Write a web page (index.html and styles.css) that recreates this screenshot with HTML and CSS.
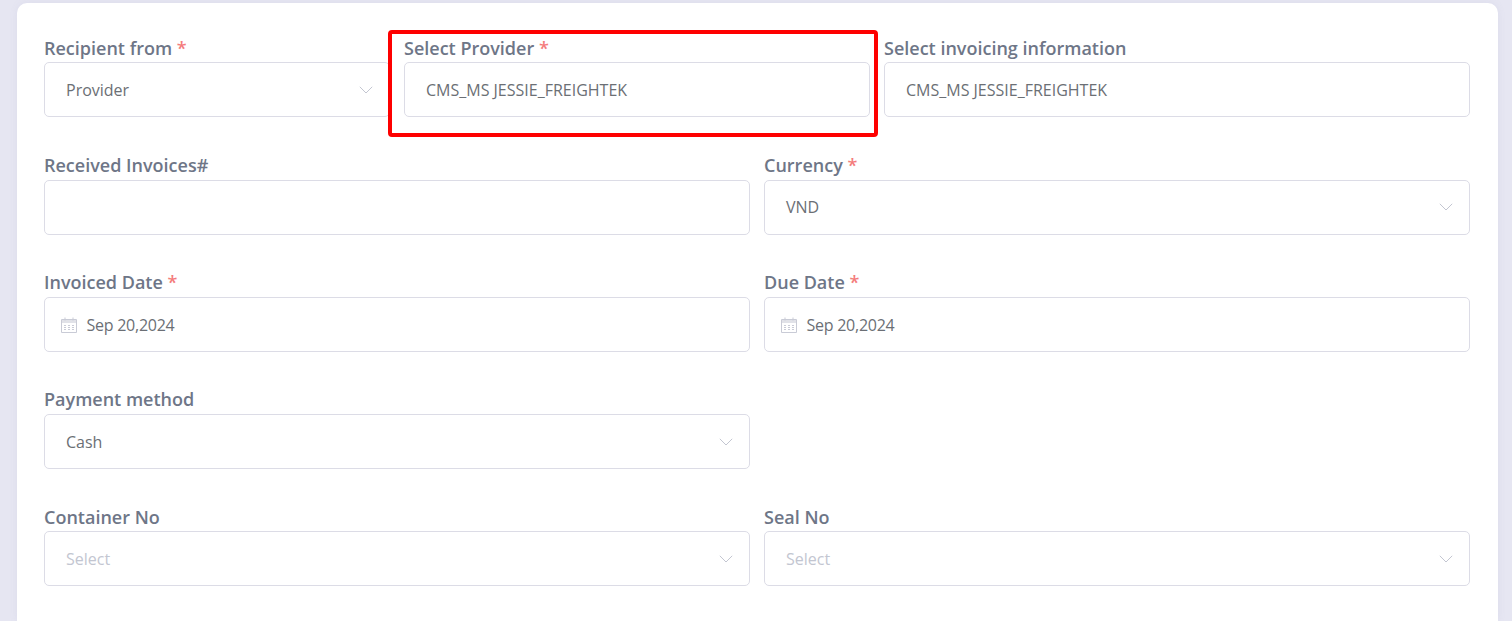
FILE: index.html
```html
<!DOCTYPE html>
<html>
<head>
<title>Invoice form</title>
<link rel="stylesheet" href="styles.css">
</head>
<body>
<svg class="sprites" width="0" height="0">
  <symbol id="chevron" viewBox="0 0 14 8"><path d="M.8.8 7 7 13.2.8" fill="none" stroke="currentColor" stroke-width="1"/></symbol>
  <symbol id="calendar" viewBox="0 0 16 16">
    <path d="M.5 2.5h15v13H.5z" fill="none" stroke="currentColor"/>
    <path d="M.5 3h15v3H.5z" fill="currentColor" opacity=".55"/>
    <path d="M4 .5v3M12 .5v3" stroke="currentColor"/>
    <path d="M3 8.5h2M7 8.5h2M11 8.5h2M3 10.5h2M7 10.5h2M11 10.5h2M3 12.5h2M7 12.5h2M11 12.5h2" stroke="currentColor"/>
  </symbol>
</svg>
<div id="card">
  <div class="row row-three">
    <div class="field">
      <label>Recipient from <span class="req">*</span></label>
      <div class="control">Provider<svg class="chevron"><use href="#chevron"/></svg></div>
    </div>
    <div class="field marked">
      <label>Select Provider <span class="req">*</span></label>
      <div class="control">CMS_MS JESSIE_FREIGHTEK</div>
      <div class="highlight"></div>
    </div>
    <div class="field">
      <label>Select invoicing information</label>
      <div class="control">CMS_MS JESSIE_FREIGHTEK</div>
    </div>
  </div>
  <div class="row">
    <div class="field">
      <label>Received Invoices#</label>
      <div class="control"></div>
    </div>
    <div class="field">
      <label>Currency <span class="req">*</span></label>
      <div class="control">VND<svg class="chevron"><use href="#chevron"/></svg></div>
    </div>
  </div>
  <div class="row">
    <div class="field">
      <label>Invoiced Date <span class="req">*</span></label>
      <div class="control date"><svg class="calendar"><use href="#calendar"/></svg>Sep 20,2024</div>
    </div>
    <div class="field">
      <label>Due Date <span class="req">*</span></label>
      <div class="control date"><svg class="calendar"><use href="#calendar"/></svg>Sep 20,2024</div>
    </div>
  </div>
  <div class="row">
    <div class="field">
      <label>Payment method</label>
      <div class="control">Cash<svg class="chevron"><use href="#chevron"/></svg></div>
    </div>
  </div>
  <div class="row">
    <div class="field">
      <label>Container No</label>
      <div class="control empty">Select<svg class="chevron"><use href="#chevron"/></svg></div>
    </div>
    <div class="field">
      <label>Seal No</label>
      <div class="control empty">Select<svg class="chevron"><use href="#chevron"/></svg></div>
    </div>
  </div>
</div>
</body>
</html>
```

FILE: styles.css
```css
html, body {
    height: 100%;
}

body {
    margin: 0;
    overflow: hidden;
    background-color: #e6e6f2;
    font-family: "Open Sans", sans-serif;
    padding: 3px 14px 0 17px;
    box-sizing: border-box;
}

.sprites {
    position: absolute;
}

#card {
    background-color: #fff;
    border-radius: 10px 10px 0 0;
    box-shadow: 0 0 8px rgba(120, 120, 170, 0.08);
    padding: 33.6px 28px 0 27px;
    height: 100%;
    box-sizing: border-box;
}

.row {
    display: grid;
    grid-template-columns: 1fr 1fr;
    column-gap: 14px;
    margin-bottom: 17.25px;
    min-height: 100px;
}

.row-three {
    grid-template-columns: 346px 466px 586px;
}

.field {
    display: flex;
    flex-direction: column;
}

.marked {
    position: relative;
}

label {
    font-size: 18px;
    font-weight: 600;
    line-height: 23px;
    color: #6e7687;
    margin-bottom: 2.8px;
}

.req {
    color: #f47c7c;
}

.control {
    height: 55px;
    box-sizing: border-box;
    border: 1px solid #dcdce6;
    border-radius: 5px;
    padding: 0.5px 21px 0;
    display: flex;
    align-items: center;
    font-size: 16px;
    color: #6b6f75;
}

.control.date {
    padding-left: 16px;
    letter-spacing: -0.25px;
}

.control.empty {
    color: #c3c6d1;
}

.chevron {
    width: 14px;
    height: 8px;
    margin-left: auto;
    margin-right: -5px;
    color: #c3c6d1;
}

.calendar {
    width: 16px;
    height: 16px;
    margin-right: 9.5px;
    color: #c9cbd6;
}

.highlight {
    position: absolute;
    left: -16px;
    right: -8px;
    top: -6.6px;
    height: 107px;
    box-sizing: border-box;
    border: 4px solid #fe0000;
    border-radius: 4px;
    pointer-events: none;
}
```
